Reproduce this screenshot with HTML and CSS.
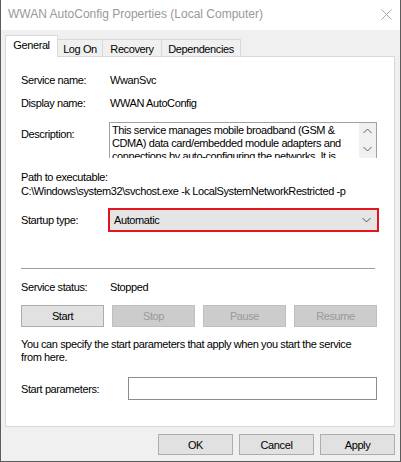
FILE: index.html
```html
<!DOCTYPE html>
<html lang="en">
<head>
  <meta charset="UTF-8" />
  <title>WWAN AutoConfig Properties (Local Computer)</title>
  <link rel="stylesheet" href="styles.css">
</head>
<body>
  <div class="dialog">
    <div class="titlebar">
      <span class="title">WWAN AutoConfig Properties (Local Computer)</span>
      <svg class="close" width="11" height="11" viewBox="0 0 11 11">
        <path d="M0.5 0.5 L10.5 10.5 M10.5 0.5 L0.5 10.5" stroke="#a8a8a8" stroke-width="1" fill="none"/>
      </svg>
    </div>

    <div class="content">
      <div class="tabs">
        <div class="tab active tab-general">General</div>
        <div class="tab tab-logon">Log On</div>
        <div class="tab tab-recovery">Recovery</div>
        <div class="tab tab-deps">Dependencies</div>
      </div>

      <div class="panel">
        <div class="row">
          <span class="label">Service name:</span>
          <span>WwanSvc</span>
        </div>
        <div class="row row-gap">
          <span class="label">Display name:</span>
          <span>WWAN AutoConfig</span>
        </div>

        <div class="row desc-row">
          <span class="label desc-label">Description:</span>
          <div class="desc-box">
            <div class="desc-text">This service manages mobile broadband (GSM &amp;<br>CDMA) data card/embedded module adapters and<br>connections by auto-configuring the networks. It is</div>
            <div class="scrollbar">
              <svg width="9" height="6" viewBox="0 0 9 6"><path d="M0.5 5 L4.5 1 L8.5 5" stroke="#606060" fill="none"/></svg>
              <svg width="9" height="6" viewBox="0 0 9 6"><path d="M0.5 1 L4.5 5 L8.5 1" stroke="#606060" fill="none"/></svg>
            </div>
          </div>
        </div>

        <div class="path">
          <div>Path to executable:</div>
          <div>C:\Windows\system32\svchost.exe -k LocalSystemNetworkRestricted -p</div>
        </div>

        <div class="row startup-row">
          <span class="label">Startup type:</span>
          <div class="select">
            <span>Automatic</span>
            <svg width="9" height="6" viewBox="0 0 9 6"><path d="M0.5 1 L4.5 5 L8.5 1" stroke="#555" fill="none"/></svg>
          </div>
        </div>

        <div class="separator"></div>

        <div class="row status-row">
          <span class="label">Service status:</span>
          <span>Stopped</span>
        </div>

        <div class="service-buttons">
          <button class="btn">Start</button>
          <button class="btn" disabled>Stop</button>
          <button class="btn" disabled>Pause</button>
          <button class="btn" disabled>Resume</button>
        </div>

        <p class="hint">You can specify the start parameters that apply when you start the service<br>from here.</p>

        <div class="row params-row">
          <span class="label params-label">Start parameters:</span>
          <input type="text" class="params-input">
        </div>
      </div>

      <div class="footer">
        <button class="btn footer-btn">OK</button>
        <button class="btn footer-btn">Cancel</button>
        <button class="btn footer-btn">Apply</button>
      </div>
    </div>
  </div>
</body>
</html>
```

FILE: styles.css
```css
html, body {
  margin: 0;
  padding: 0;
}

body {
  font-family: "Liberation Sans", Arial, sans-serif;
  font-size: 11px;
  letter-spacing: -0.4px;
  color: #000;
  background: #fff;
}

.dialog {
  width: 401px;
  height: 462px;
  box-sizing: border-box;
  border: 1px solid #5c5c5c;
  border-top: none;
  display: flex;
  flex-direction: column;
  background: #f0f0f0;
}

.titlebar {
  height: 30px;
  flex: none;
  background: #fff;
  display: flex;
  align-items: center;
  justify-content: space-between;
  padding: 0 8px 2px 7px;
  box-sizing: border-box;
}

.title {
  font-size: 12px;
  letter-spacing: 0;
  color: #999;
}

.content {
  padding: 5px 5px 0 4px;
}

/* tabs */
.tabs {
  display: flex;
  align-items: flex-end;
  height: 21px;
}

.tab {
  height: 17px;
  box-sizing: border-box;
  border: 1px solid #d9d9d9;
  border-bottom: none;
  background: #f0f0f0;
  display: flex;
  align-items: center;
  justify-content: center;
  margin-left: -1px;
  padding-top: 1px;
}

.tab.active {
  height: 22px;
  margin-bottom: -1px;
  margin-left: 0;
  background: #fff;
  position: relative;
  z-index: 1;
  padding-top: 0;
  padding-bottom: 4px;
}

.tab-general { width: 53px; }
.tab-logon { width: 46px; }
.tab-recovery { width: 60px; }
.tab-deps { width: 80px; }

.panel {
  height: 371px;
  box-sizing: border-box;
  border: 1px solid #d9d9d9;
  background: #fff;
  padding: 15px 0 0 15px;
}

.row {
  display: flex;
  align-items: center;
  line-height: 16px;
}

.label {
  width: 89px;
  flex: none;
}

.row-gap {
  margin-top: 7px;
}

/* description */
.desc-row {
  margin-top: 11px;
  align-items: flex-start;
}

.desc-label {
  margin-top: 4px;
}

.desc-box {
  margin-left: -1px;
  width: 268px;
  height: 36px;
  box-sizing: border-box;
  border: 1px solid #a0a0a0;
  border-bottom: none;
  display: flex;
  overflow: hidden;
}

.desc-text {
  flex: 1;
  padding: 1px 0 0 2px;
  line-height: 13px;
  white-space: nowrap;
  overflow: hidden;
}

.scrollbar {
  width: 17px;
  flex: none;
  background: #f0f0f0;
  display: flex;
  flex-direction: column;
  align-items: center;
  padding-top: 5px;
  gap: 12px;
}

.path {
  margin-top: 12px;
  line-height: 14px;
}

/* startup type */
.startup-row {
  margin-top: 10px;
}

.select {
  margin-left: -2px;
  width: 271px;
  height: 24px;
  box-sizing: border-box;
  border: 2px solid #e3141c;
  background: #e5e5e5;
  display: flex;
  align-items: center;
  justify-content: space-between;
  padding: 0 6px 0 4px;
}

.separator {
  margin-top: 36px;
  width: 354px;
  height: 1px;
  background: #a0a0a0;
}

.status-row {
  margin-top: 11px;
  line-height: 14px;
}

/* buttons */
.btn {
  font-family: inherit;
  font-size: 11px;
  letter-spacing: -0.4px;
  color: #000;
  height: 22px;
  box-sizing: border-box;
  border: 1px solid #adadad;
  background: #e1e1e1;
  padding: 0;
  border-radius: 0;
}

.btn:disabled {
  background: #cccccc;
  border-color: #bfbfbf;
  color: #9a9a9a;
}

.service-buttons {
  margin-top: 11px;
  width: 356px;
  display: grid;
  grid-template-columns: repeat(4, 1fr);
  gap: 8px;
}

.hint {
  margin: 11px 0 0 0;
  line-height: 13px;
}

.params-row {
  margin-top: 13px;
}

.params-label {
  width: 107px;
}

.params-input {
  width: 249px;
  height: 23px;
  box-sizing: border-box;
  border: 1px solid #8c8c8c;
  padding: 0;
  margin: 0;
  background: #fff;
}

.footer {
  display: flex;
  justify-content: flex-end;
  gap: 6px;
  padding-top: 7px;
}

.footer-btn {
  width: 75px;
  height: 21px;
}
```
